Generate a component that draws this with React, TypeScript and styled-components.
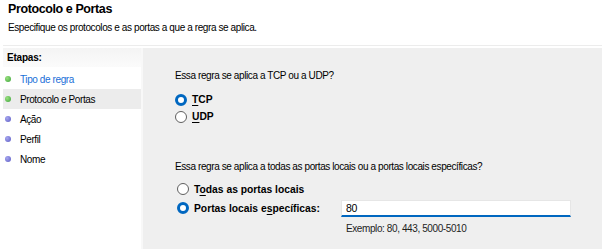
import React from 'react';
import styled, { createGlobalStyle } from 'styled-components';

const GlobalStyle = createGlobalStyle`
  html, body {
    margin: 0;
    padding: 0;
    background: #ffffff;
  }
  body {
    font-family: "Liberation Sans", Arial, sans-serif;
    font-size: 10px;
    letter-spacing: -0.4px;
    color: #000;
  }
`;

const Window = styled.div`
  width: 602px;
  height: 249px;
  display: flex;
  flex-direction: column;
  overflow: hidden;
  background: #fff;
`;

const Header = styled.div`
  padding: 0 0 0 8px;
  height: 45px;
  box-sizing: border-box;
`;

const Title = styled.div`
  font-size: 12.5px;
  font-weight: 700;
  letter-spacing: -0.4px;
  line-height: 16px;
  padding-top: 1px;
`;

const Subtitle = styled.div`
  font-size: 10px;
  line-height: 14px;
  margin-top: 4px;
`;

const Separator = styled.div`
  height: 1px;
  margin-left: 3px;
  background: #ececec;
`;

const Body = styled.div`
  flex: 1;
  display: flex;
  padding-top: 2px;
  padding-left: 3px;
`;

const Steps = styled.div`
  width: 138px;
  background: #fff;
  border-right: 2px solid #f8f8f8;
`;

const StepsHeader = styled.div`
  height: 19px;
  display: flex;
  align-items: center;
  padding-left: 4px;
  font-weight: 700;
  font-size: 10px;
  letter-spacing: -0.2px;
  background: linear-gradient(#f4f4f4, #fbfbfb);
  margin-bottom: 2px;
`;

const StepRow = styled.div<{ $selected?: boolean; $link?: boolean }>`
  height: 20px;
  display: flex;
  align-items: center;
  padding-left: 2px;
  background: ${p => (p.$selected ? '#ececec' : 'transparent')};
  color: ${p => (p.$link ? '#1a6fd8' : '#000')};
`;

const Bullet = styled.span<{ $done?: boolean }>`
  width: 6px;
  height: 6px;
  border-radius: 50%;
  margin-right: 9px;
  background: ${p =>
    p.$done
      ? 'radial-gradient(circle at 35% 35%, #9be07f, #3aa43a)'
      : 'radial-gradient(circle at 35% 35%, #a8a8f0, #5a5ac4)'};
`;

const Content = styled.div`
  flex: 1;
  background: #efefef;
  padding: 20px 0 0 32px;
`;

const Question = styled.div<{ $top?: number }>`
  line-height: 16px;
  margin-top: ${p => p.$top ?? 0}px;
`;

const RadioGroup = styled.div<{ $indent?: number; $top: number }>`
  display: flex;
  flex-direction: column;
  margin-top: ${p => p.$top}px;
  margin-left: ${p => p.$indent ?? 0}px;
`;

const RadioRow = styled.div<{ $height: number }>`
  display: flex;
  align-items: center;
  height: ${p => p.$height}px;
`;

const Radio = styled.span<{ $checked?: boolean }>`
  width: 12px;
  height: 12px;
  box-sizing: border-box;
  border-radius: 50%;
  flex: none;
  background: #fff;
  border: ${p => (p.$checked ? '3.5px solid #0067c0' : '1px solid #5f5f5f')};
  margin-right: 5px;
`;

const RadioLabel = styled.span<{ $width?: number }>`
  font-weight: 700;
  font-size: 10.3px;
  letter-spacing: 0;
  width: ${p => (p.$width ? `${p.$width}px` : 'auto')};
  flex: none;
  u {
    text-decoration-thickness: 1px;
    text-underline-offset: 2px;
  }
`;

const PortInput = styled.div`
  width: 230px;
  height: 17px;
  box-sizing: border-box;
  background: #fff;
  border: 1px solid #e6e6e6;
  border-bottom: 2px solid #0067c0;
  display: flex;
  align-items: center;
  padding-left: 4px;
  font-size: 10.5px;
`;

const Hint = styled.div`
  margin-left: 171px;
  margin-top: 4px;
  line-height: 14px;
  color: #1e1e1e;
`;

const steps = [
  { label: 'Tipo de regra', done: true, link: true },
  { label: 'Protocolo e Portas', done: true, selected: true },
  { label: 'Ação' },
  { label: 'Perfil' },
  { label: 'Nome' },
];

export default function App() {
  return (
    <>
      <GlobalStyle />
      <Window>
        <Header>
          <Title>Protocolo e Portas</Title>
          <Subtitle>Especifique os protocolos e as portas a que a regra se aplica.</Subtitle>
        </Header>
        <Separator />
        <Body>
          <Steps>
            <StepsHeader>Etapas:</StepsHeader>
            {steps.map(s => (
              <StepRow key={s.label} $selected={s.selected} $link={s.link}>
                <Bullet $done={s.done} />
                {s.label}
              </StepRow>
            ))}
          </Steps>
          <Content>
            <Question>Essa regra se aplica a TCP ou a UDP?</Question>
            <RadioGroup $top={7}>
              <RadioRow $height={17}>
                <Radio $checked />
                <RadioLabel><u>T</u>CP</RadioLabel>
              </RadioRow>
              <RadioRow $height={17}>
                <Radio />
                <RadioLabel><u>U</u>DP</RadioLabel>
              </RadioRow>
            </RadioGroup>
            <Question $top={34}>
              Essa regra se aplica a todas as portas locais ou a portas locais específicas?
            </Question>
            <RadioGroup $top={5} $indent={2}>
              <RadioRow $height={18}>
                <Radio />
                <RadioLabel>T<u>o</u>das as portas locais</RadioLabel>
              </RadioRow>
              <RadioRow $height={20}>
                <Radio $checked />
                <RadioLabel $width={147}>Portas locais e<u>s</u>pecíficas:</RadioLabel>
                <PortInput>80</PortInput>
              </RadioRow>
            </RadioGroup>
            <Hint>Exemplo: 80, 443, 5000-5010</Hint>
          </Content>
        </Body>
      </Window>
    </>
  );
}
